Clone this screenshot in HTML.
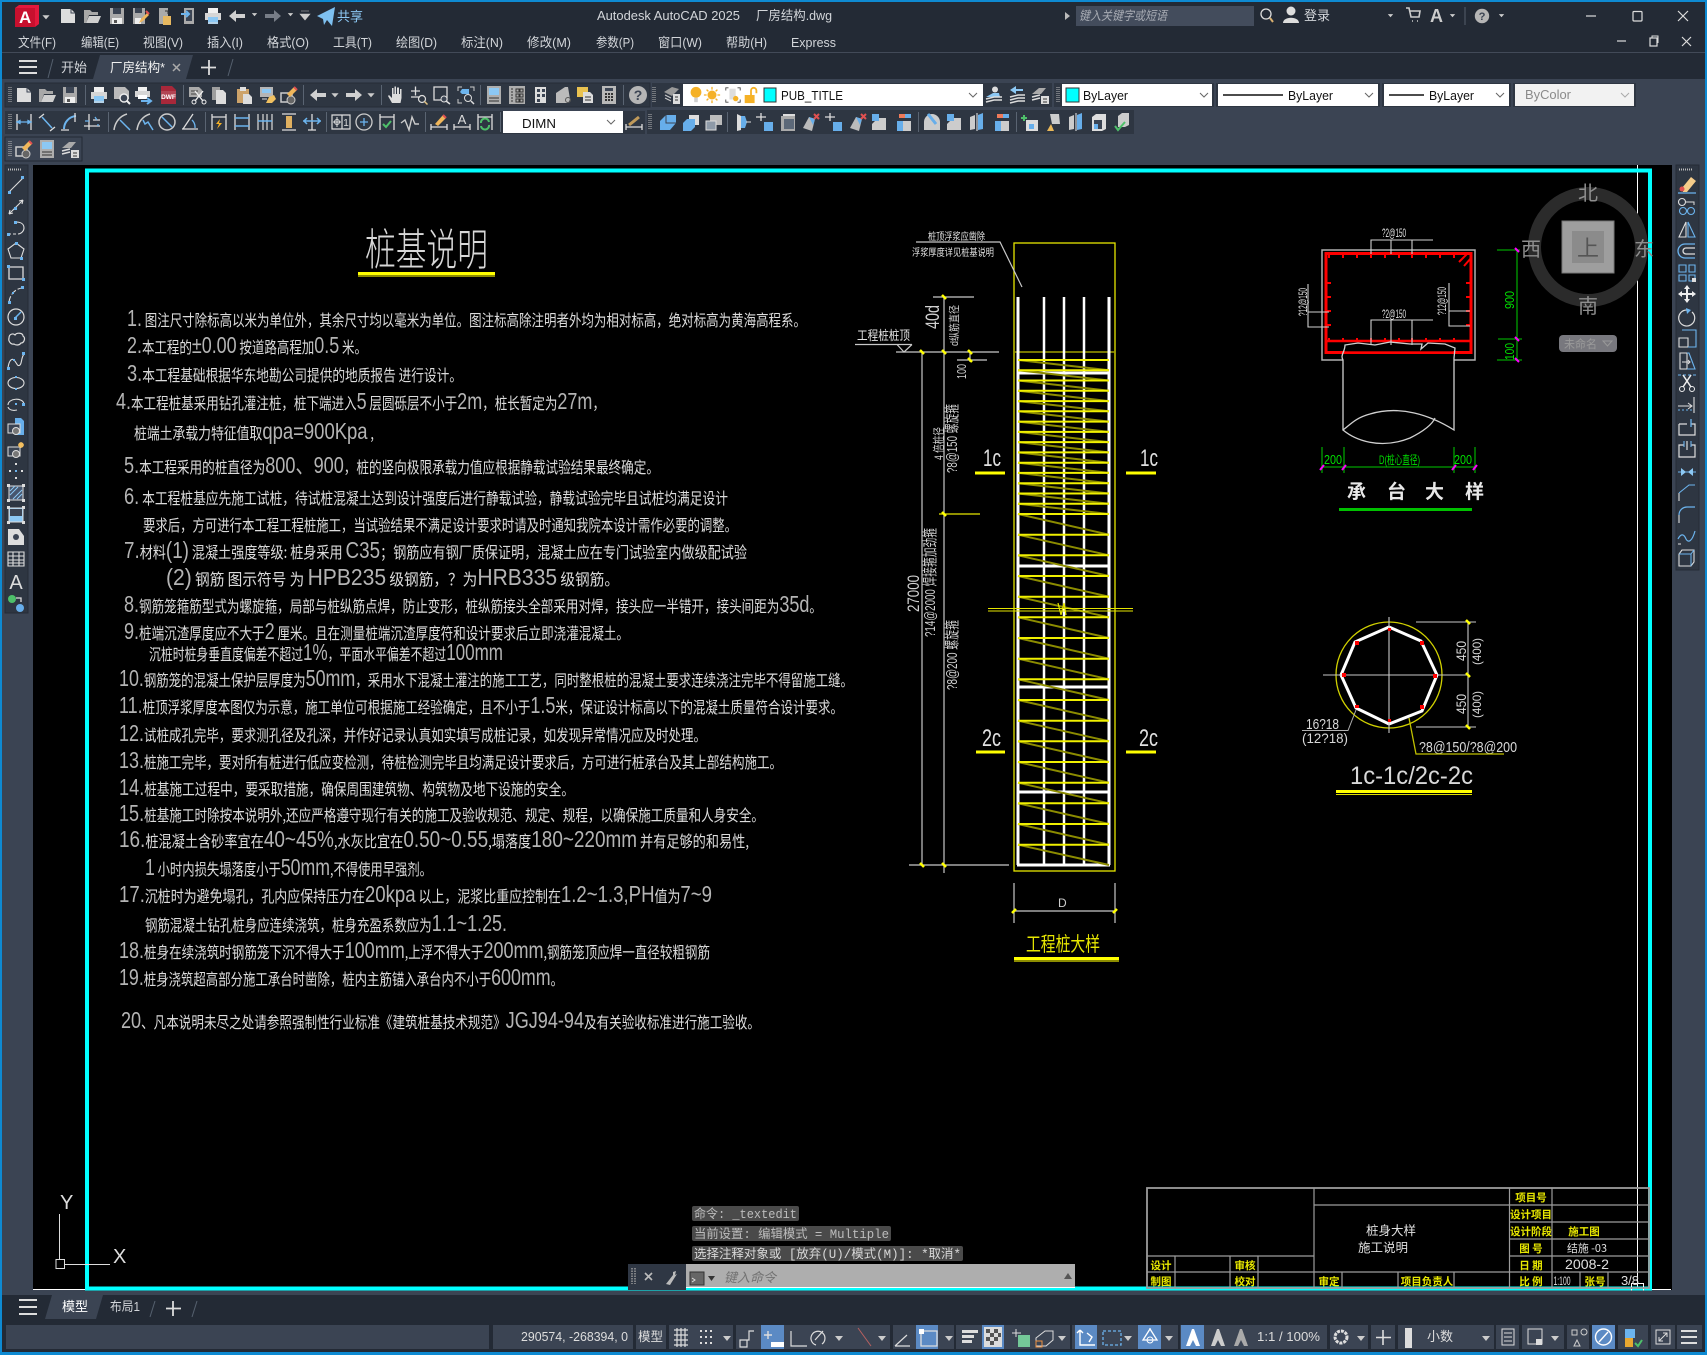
<!DOCTYPE html>
<html><head><meta charset="utf-8"><title>AutoCAD</title>
<style>
html,body{margin:0;padding:0;background:#232a35;overflow:hidden}
svg{display:block}
text{font-family:"Liberation Sans","Noto Sans CJK SC",sans-serif}
.m{font-size:13px;fill:#d3d6da}
.t{font-size:16px;fill:#dcdcdc;font-family:"Noto Sans CJK SC",sans-serif}
.n{font-size:23px;font-family:"Liberation Sans",sans-serif;fill:#b4b4b4}
.s{font-size:10px;fill:#e4e4e4;font-family:"Noto Sans CJK SC",sans-serif}
.y{font-size:10.5px;fill:#e8e800;font-family:"Noto Sans CJK SC",sans-serif;text-anchor:middle;font-weight:700}
.w{font-size:11px;fill:#e0e0e0;font-family:"Noto Sans CJK SC",sans-serif;text-anchor:middle}
.h{font-family:"Liberation Mono","Noto Sans CJK SC",monospace;font-size:12.5px;fill:#bdbdbd}
.dd{font-size:13px;fill:#111}
</style></head><body>
<svg xmlns="http://www.w3.org/2000/svg" width="1707" height="1355" viewBox="0 0 1707 1355">
<defs>
<symbol id="new" viewBox="0 0 20 20"><path d="M3 3h10l4 4v10H3z" fill="#ddd"/><path d="M13 3v4h4" fill="none" stroke="#3b4453"/></symbol>
<symbol id="open" viewBox="0 0 20 20"><path d="M2 17V4h6l2 2h6v3H7l-3 8z" fill="#a8a8a8"/><path d="M4 17l3-7h12l-3 7z" fill="#cfcfcf"/></symbol>
<symbol id="save" viewBox="0 0 20 20"><path d="M3 2h14v16H3z" fill="#a9a9a9"/><path d="M6 2h8v6H6z" fill="#3b4453"/><path d="M5 12h10v6H5z" fill="#eee"/><path d="M7 14h3v3H7z" fill="#555"/></symbol>
<symbol id="saveas" viewBox="0 0 20 20"><path d="M3 2h12v16H3z" fill="#a9a9a9"/><path d="M5 2h7v5H5z" fill="#3b4453"/><path d="M5 12h6v6H5z" fill="#eee"/><path d="M9 17l2-4 6-6 2 2-6 6z" fill="#f0b65a"/><path d="M16 5l3 3" stroke="#e05050" stroke-width="2"/></symbol>
<symbol id="sheet" viewBox="0 0 20 20"><path d="M5 2h9v16H5z" fill="#aaa"/><path d="M9 10h8v9H9z" fill="#e7b860"/><path d="M11 5h3v3" fill="none" stroke="#333"/></symbol>
<symbol id="pub" viewBox="0 0 20 20"><path d="M5 2h10v16H5z" fill="#aaa"/><path d="M7 4h6v11H7z" fill="#3b4453"/><path d="M2 8h8M7 5l3 3-3 3" fill="none" stroke="#6cb4ee" stroke-width="2"/></symbol>
<symbol id="print" viewBox="0 0 20 20"><path d="M5 2h10v5H5z" fill="#f0f0f0"/><path d="M2 7h16v7H2z" fill="#d6d6d6"/><path d="M5 11h10v7H5z" fill="#8cc8f4"/><path d="M5 17h10" stroke="#ddd"/></symbol>
<symbol id="prev" viewBox="0 0 20 20"><path d="M2 2h11l4 4v8H2z" fill="#bbb"/><circle cx="12" cy="13" r="4" fill="#3b4453" stroke="#eee" stroke-width="1.4"/><path d="M15 16l3 3" stroke="#eee" stroke-width="2"/></symbol>
<symbol id="plot" viewBox="0 0 20 20"><path d="M4 2h9v4H4z" fill="#f0f0f0"/><path d="M1 6h15v6H1z" fill="#d6d6d6"/><path d="M4 10h9v4H4z" fill="#fff"/><path d="M7 16h9M13 13l4 3-4 3" fill="none" stroke="#6cb4ee" stroke-width="2"/></symbol>
<symbol id="dwf" viewBox="0 0 20 20"><path d="M3 1h11l4 4v14H3z" fill="#a8283a"/><path d="M3 6h15v8H3z" fill="#eee" opacity=".15"/><text x="10.5" y="14" font-size="6.5" font-weight="700" fill="#fff" text-anchor="middle">DWF</text></symbol>
<symbol id="cut" viewBox="0 0 20 20"><path d="M2 2h10l3 3v7H2z" fill="#aaa"/><path d="M4 6h7M4 9h7" stroke="#444"/><path d="M8 6l8 10M16 6L8 16" stroke="#eee" stroke-width="1.4"/><circle cx="7" cy="17" r="2" fill="none" stroke="#eee"/><circle cx="17" cy="17" r="2" fill="none" stroke="#eee"/></symbol>
<symbol id="copy" viewBox="0 0 20 20"><path d="M3 2h8v13H3z" fill="#9e9e9e"/><path d="M7 5h7l3 3v11H7z" fill="#ddd"/></symbol>
<symbol id="paste" viewBox="0 0 20 20"><path d="M3 4h12v14H3z" fill="#cda36a"/><path d="M6 2h6v4H6z" fill="#e0e0e0"/><path d="M9 9h6l3 3v7H9z" fill="#ddd"/></symbol>
<symbol id="match" viewBox="0 0 20 20"><path d="M3 2h13v10H3z" fill="#b5b5b5"/><path d="M5 4h9v4H5z" fill="#8cc8f4"/><path d="M5 14h5" stroke="#ddd"/><path d="M9 18l3-6 5-2 2 4-4 4z" fill="#f0c060"/></symbol>
<symbol id="brush" viewBox="0 0 20 20"><path d="M2 8h11v9H2z" fill="none" stroke="#ccc" stroke-width="1.5"/><circle cx="12" cy="15" r="4" fill="#666" stroke="#ccc"/><path d="M8 9l7-7 3 3-7 7z" fill="#f0b65a"/><path d="M15 2l3 3" stroke="#e05050" stroke-width="2"/></symbol>
<symbol id="undo" viewBox="0 0 20 20"><path d="M9 4L2 10l7 6v-4h9V8H9z" fill="#d0d0d0"/></symbol>
<symbol id="redo" viewBox="0 0 20 20"><path d="M11 4l7 6-7 6v-4H2V8h9z" fill="#d0d0d0"/></symbol>
<symbol id="redog" viewBox="0 0 20 20"><path d="M11 4l7 6-7 6v-4H2V8h9z" fill="#777d87"/></symbol>
<symbol id="arr" viewBox="0 0 20 20"><path d="M4 7h12l-6 7z" fill="#ccc"/></symbol>
<symbol id="hand" viewBox="0 0 20 20"><path d="M6 18L2 11l1-1 3 3V3h1.500v6h1V1.500h1.500V9h1V2.500H13V9h1V4h1.500v9l-1 5z" fill="#ddd"/></symbol>
<symbol id="zr" viewBox="0 0 20 20"><path d="M2 6h9M6.500 1.500v9M2 12h9" stroke="#ddd" fill="none" stroke-width="1.300"/><circle cx="13" cy="14" r="3.500" fill="none" stroke="#ddd" stroke-width="1.200"/><path d="M15.500 16.500l3 3" stroke="#e0c080" stroke-width="1.500"/></symbol>
<symbol id="zw" viewBox="0 0 20 20"><path d="M2 2h13v13H2z" fill="none" stroke="#ddd" stroke-width="1.300"/><circle cx="12" cy="14" r="3" fill="#3b4453" stroke="#ddd"/><path d="M14 16l4 3" stroke="#ddd" stroke-width="1.500"/></symbol>
<symbol id="zp" viewBox="0 0 20 20"><path d="M2 6V2h4M14 2h4v4M2 14v4h4" fill="none" stroke="#ccc"/><path d="M13 4H6L4 7l2 2h7z" fill="#6cb4ee"/><circle cx="12" cy="13" r="3.500" fill="none" stroke="#ddd"/><path d="M15 16l3 3" stroke="#ddd" stroke-width="1.500"/></symbol>
<symbol id="pr" viewBox="0 0 20 20"><path d="M3 1h14v18H3z" fill="#aeaeae"/><path d="M5 3h10v7H5z" fill="#8cc8f4"/><path d="M5 13h10M5 16h10" stroke="#333"/></symbol>
<symbol id="dc" viewBox="0 0 20 20"><path d="M2 1h16v18H2z" fill="#aeaeae"/><path d="M5 3v14" stroke="#333" stroke-dasharray="2 1"/><path d="M9 4h3v3H9zM13 4h3v3h-3zM9 9h3v3H9zM13 9h3v3h-3zM9 14h3v3H9zM13 14h3v3h-3z" fill="none" stroke="#333"/></symbol>
<symbol id="tp" viewBox="0 0 20 20"><path d="M4 2h11v16H4z" fill="#ddd"/><path d="M6 4h3v3H6zM11 4h3v3h-3zM6 9h3v3H6zM11 9h3v3h-3zM6 14h3v3H6z" fill="#3b4453"/></symbol>
<symbol id="ss" viewBox="0 0 20 20"><path d="M2 18V8l9-6h3l2 12c-1 4-3 4-4 4z" fill="#bbb"/><circle cx="14" cy="15" r="2.500" fill="none" stroke="#555"/></symbol>
<symbol id="mk" viewBox="0 0 20 20"><path d="M2 2h11v10H2z" fill="#e9c250"/><path d="M8 7h7l3 3v8H8z" fill="#ddd"/><path d="M10 12h6M10 15h6" stroke="#333"/></symbol>
<symbol id="calc" viewBox="0 0 20 20"><path d="M3 1h14v18H3z" fill="#b8b8b8"/><path d="M6 3h8v3H6z" fill="#3b4453"/><path d="M6 8h2v2H6zM9 8h2v2H9zM12 8h2v2h-2zM6 11h2v2H6zM9 11h2v2H9zM12 11h2v2h-2zM6 14h2v2H6zM9 14h2v2H9zM12 14h2v2h-2z" fill="#333"/></symbol>
<symbol id="help" viewBox="0 0 20 20"><circle cx="10" cy="10" r="9" fill="#b5b5b5"/><text x="10" y="15" font-size="14" font-weight="700" fill="#3b4453" text-anchor="middle">?</text></symbol>
<symbol id="grip" viewBox="0 0 4 20"><path d="M1 2v16M3 2v16" stroke="#bbb" stroke-dasharray="1 1"/></symbol>
<symbol id="lyr" viewBox="0 0 20 20"><path d="M2 7l8-5 7 2-7 7z" fill="#999"/><path d="M3 10l6 3M3 13l6 3" stroke="#ccc"/><path d="M11 9h7v10h-7z" fill="#ddd"/><path d="M13 12h3M13 15h3" stroke="#333"/></symbol>
<symbol id="bulb" viewBox="0 0 20 20"><circle cx="10" cy="7" r="6" fill="#f5b126"/><path d="M8 13h4v5H8z" fill="#d0d0d0"/></symbol>
<symbol id="sun" viewBox="0 0 20 20"><circle cx="10" cy="10" r="5" fill="#f5b126"/><path d="M10 1v3M10 16v3M1 10h3M16 10h3M4 4l2 2M14 14l2 2M16 4l-2 2M4 16l2-2" stroke="#f5b126" stroke-width="1.500"/></symbol>
<symbol id="frz" viewBox="0 0 20 20"><path d="M2 5V2h3M15 2h3v3M2 15v3h3M15 18h3v-3" fill="none" stroke="#444"/><path d="M6 3h7v12H6z" fill="#ddd"/><circle cx="13" cy="14" r="3" fill="#f5b126"/></symbol>
<symbol id="lock" viewBox="0 0 20 20"><path d="M3 10h11v9H3z" fill="#f5b126"/><path d="M10 10V5a3 3 0 0 1 6 0v3" fill="none" stroke="#f5b126" stroke-width="2"/></symbol>
<symbol id="lm" viewBox="0 0 20 20"><circle cx="11" cy="4.500" r="3" fill="#ddd"/><path d="M2 12l7-4h6l1 4z" fill="#8cc8f4"/><path d="M2 14l8-2 8 0M2 17l8-2 8 0" stroke="#ddd" stroke-width="1.500" fill="none"/></symbol>
<symbol id="lp" viewBox="0 0 20 20"><path d="M9 1L3 5l6 4V6h7V4H9z" fill="#8cc8f4"/><path d="M3 12l8-2h7M3 15l8-2h7M3 18l8-2h7" stroke="#ddd" stroke-width="1.500" fill="none"/></symbol>
<symbol id="lw" viewBox="0 0 20 20"><path d="M2 9l7-6h7l-5 6z" fill="#aaa"/><path d="M2 12l8-2M2 15l8-2" stroke="#ddd" stroke-width="1.500"/><path d="M11 11h8v8h-8z" fill="#ddd"/><path d="M13 14h4M13 17h4" stroke="#333"/></symbol>
<symbol id="d1" viewBox="0 0 20 20"><path d="M3 2v16M17 2v16" stroke="#ddd" stroke-width="1.300"/><path d="M3 10h14M3 10l3-1.500v3zM17 10l-3-1.500v3z" stroke="#6cb4ee" stroke-width="1.300" fill="#6cb4ee"/></symbol>
<symbol id="d2" viewBox="0 0 20 20"><path d="M2 6l5-4M13 19l5-4" stroke="#ddd" stroke-width="1.300"/><path d="M5 5l10 11" stroke="#6cb4ee" stroke-width="1.500"/></symbol>
<symbol id="d3" viewBox="0 0 20 20"><path d="M4 17A13 13 0 0 1 16 4" fill="none" stroke="#6cb4ee" stroke-width="2"/><path d="M1 18h8M15 1v9" stroke="#ddd" stroke-width="1.300"/></symbol>
<symbol id="d4" viewBox="0 0 20 20"><path d="M2 14h16M7 2v16M11 8h7" stroke="#ddd" stroke-width="1.300"/><path d="M7 9H3M13 5l2 3M16 12v2" stroke="#6cb4ee" stroke-width="1.300"/></symbol>
<symbol id="d5" viewBox="0 0 20 20"><path d="M2 18C3 10 8 4 15 2" fill="none" stroke="#ccc" stroke-width="1.500"/><path d="M8 8l10 10" stroke="#6cb4ee" stroke-width="1.500"/></symbol>
<symbol id="d6" viewBox="0 0 20 20"><path d="M2 18C3 10 8 4 15 2" fill="none" stroke="#ccc" stroke-width="1.500"/><path d="M8 8l2 4 3-2 5 8" fill="none" stroke="#6cb4ee" stroke-width="1.500"/></symbol>
<symbol id="d7" viewBox="0 0 20 20"><circle cx="10" cy="10" r="8" fill="none" stroke="#ccc" stroke-width="1.500"/><path d="M5 5l10 10" stroke="#6cb4ee" stroke-width="1.500"/></symbol>
<symbol id="d8" viewBox="0 0 20 20"><path d="M2 17h16M3 17L13 2" stroke="#ddd" stroke-width="1.300"/><path d="M12 8a10 10 0 0 1 3 8" fill="none" stroke="#6cb4ee" stroke-width="1.300"/></symbol>
<symbol id="d9" viewBox="0 0 20 20"><path d="M3 2v16M17 2v16M3 5h14" stroke="#ddd" stroke-width="1.300"/><path d="M11 7l-4 5h3l-2 5 5-6h-3z" fill="#f5b126"/></symbol>
<symbol id="d10" viewBox="0 0 20 20"><path d="M3 2v16M17 2v16" stroke="#ddd" stroke-width="1.300"/><path d="M3 6h14M3 14h14" stroke="#6cb4ee" stroke-width="1.500"/></symbol>
<symbol id="d11" viewBox="0 0 20 20"><path d="M3 2v16M17 2v16M8 2v16M12 2v16" stroke="#ddd" stroke-width="1.200"/><path d="M3 9h14" stroke="#6cb4ee" stroke-width="1.500"/></symbol>
<symbol id="d12" viewBox="0 0 20 20"><path d="M3 2h14M3 18h14" stroke="#ddd" stroke-width="1.300"/><path d="M7 4h6v12H7z" fill="#e0b060"/></symbol>
<symbol id="d13" viewBox="0 0 20 20"><path d="M10 2v16M6 18h8" stroke="#ddd" stroke-width="1.300"/><path d="M1 9h18M15 6l3 3-3 3M5 6L2 9l3 3" fill="none" stroke="#6cb4ee" stroke-width="1.500"/></symbol>
<symbol id="d14" viewBox="0 0 20 20"><path d="M1 3h18v14H1zM11 3v14" fill="none" stroke="#ddd" stroke-width="1.200"/><circle cx="6" cy="10" r="2.500" fill="none" stroke="#ddd"/><path d="M6 5v10M2 10h8" stroke="#ddd"/><text x="15" y="14" font-size="10" fill="#ddd" text-anchor="middle">1</text></symbol>
<symbol id="d15" viewBox="0 0 20 20"><circle cx="10" cy="10" r="8" fill="none" stroke="#ccc" stroke-width="1.300"/><path d="M10 6v8M6 10h8" stroke="#6cb4ee" stroke-width="1.300"/></symbol>
<symbol id="d16" viewBox="0 0 20 20"><path d="M3 2v16M17 2v16M3 5h14" stroke="#ddd" stroke-width="1.300"/><path d="M6 12l3 3 5-6" fill="none" stroke="#4ec06a" stroke-width="2"/></symbol>
<symbol id="d17" viewBox="0 0 20 20"><path d="M1 11l4-3 4 10 3-13 3 7h4" fill="none" stroke="#ccc" stroke-width="1.400"/></symbol>
<symbol id="d18" viewBox="0 0 20 20"><path d="M2 12v6M18 12v6M2 15h16" stroke="#ddd" stroke-width="1.300"/><path d="M6 12l8-9 3 3-8 8z" fill="#f0b65a"/><path d="M14 3l3 3" stroke="#e05050" stroke-width="2"/></symbol>
<symbol id="d19" viewBox="0 0 20 20"><path d="M2 12v6M18 12v6M2 15h16" stroke="#ddd" stroke-width="1.300"/><text x="10" y="12" font-size="13" fill="#ddd" text-anchor="middle">A</text></symbol>
<symbol id="d20" viewBox="0 0 20 20"><path d="M3 2v16M17 2v16M3 5h14" stroke="#ddd" stroke-width="1.300"/><path d="M6 11a4 4 0 0 1 8-1M14 13a4 4 0 0 1-8 1" fill="none" stroke="#4ec06a" stroke-width="2"/></symbol>
<symbol id="d21" viewBox="0 0 20 20"><path d="M2 12v6M18 12v6M2 15h16" stroke="#ddd" stroke-width="1.300"/><path d="M5 13l10-8" stroke="#c09a5a" stroke-width="3"/></symbol>
<symbol id="s1" viewBox="0 0 20 20"><path d="M2 9l6-6h10v8l-6 7H2z" fill="#67aeea"/><path d="M8 3v8h10" fill="none" stroke="#3b4453"/></symbol>
<symbol id="s2" viewBox="0 0 20 20"><path d="M2 11l4-4h8v8l-4 4H2z" fill="#67aeea"/><path d="M8 3h10v10h-4V7H8z" fill="#ddd"/></symbol>
<symbol id="s3" viewBox="0 0 20 20"><path d="M6 3h12v10H6z" fill="#bbb"/><path d="M2 9h10v9H2z" fill="#8e9aa8" stroke="#ddd"/></symbol>
<symbol id="s4" viewBox="0 0 20 20"><path d="M5 2l4 2v14l-4 1z" fill="#ddd"/><path d="M9 4h4l2 6-2 6H9z" fill="#67aeea"/><path d="M14 10h5" stroke="#ddd"/></symbol>
<symbol id="s5" viewBox="0 0 20 20"><path d="M1 5h10M6 1v8" stroke="#ddd" stroke-width="1.300"/><path d="M9 10h9v9H9z" fill="#67aeea"/></symbol>
<symbol id="s6" viewBox="0 0 20 20"><path d="M3 4h14v15H3z" fill="#aaa"/><path d="M6 7h10v10H6z" fill="#5c6878"/><path d="M5 2h12v2H5z" fill="#ddd"/></symbol>
<symbol id="s7" viewBox="0 0 20 20"><path d="M2 16L8 5l6 2-3 12z" fill="#bbb"/><path d="M8 5l6 2-2 6" fill="#67aeea"/><path d="M13 2l5 5M18 2l-5 5" stroke="#e05050" stroke-width="2"/></symbol>
<symbol id="s8" viewBox="0 0 20 20"><path d="M10 2a8 8 0 0 1 8 8v8H2v-8a8 8 0 0 1 8-8z" fill="#ccc"/><path d="M6 2l8 10" stroke="#67aeea" stroke-width="3"/></symbol>
<symbol id="s9" viewBox="0 0 20 20"><path d="M2 12l6-6h8v12H2z" fill="#ccc"/><path d="M2 2h7v7H2z" fill="#67aeea"/></symbol>
<symbol id="s10" viewBox="0 0 20 20"><path d="M6 2h8v4H6z" fill="#ee7a5a"/><path d="M12 2h6v4h-6z" fill="#67aeea"/><path d="M4 9h14v10H4z" fill="#67aeea"/><path d="M10 9h8v10h-8z" fill="#ccc"/></symbol>
<symbol id="s11" viewBox="0 0 20 20"><path d="M1 6h6M4 3v6" stroke="#4ec06a" stroke-width="2"/><path d="M6 8h12v11H6z" fill="#ddd"/><path d="M9 12h5v5H9z" fill="#67aeea"/></symbol>
<symbol id="s12" viewBox="0 0 20 20"><path d="M7 2h9l1 10H9z" fill="#ccc"/><path d="M8 12l-4 7h7z" fill="#e9b85a"/></symbol>
<symbol id="s13" viewBox="0 0 20 20"><path d="M3 5l5-2v14l-5 1z" fill="#ccc"/><path d="M11 3l5-2v16l-5 1z" fill="#67aeea"/><path d="M10 1v18" stroke="#eee"/></symbol>
<symbol id="s14" viewBox="0 0 20 20"><path d="M3 5l4-3h10v15l-4 2H3z" fill="#ddd"/><path d="M5 8h8v9H5z" fill="#3b4453"/><path d="M5 12h4v5H5z" fill="#67aeea"/></symbol>
<symbol id="s15" viewBox="0 0 20 20"><path d="M6 4l4-3h7v12l-4 2H6z" fill="#ccc"/><path d="M3 14l3 4 7-8" fill="none" stroke="#4ec06a" stroke-width="2"/></symbol>
<symbol id="l1" viewBox="0 0 20 20"><path d="M3 17L17 3" stroke="#ddd" stroke-width="1.100"/><path d="M2 16h3v3H2zM15 1h3v3h-3z" fill="#6cb4ee"/></symbol>
<symbol id="l2" viewBox="0 0 20 20"><path d="M3 17L17 3M3 17l1-4M3 17l4-1M17 3l-1 4M17 3l-4 1" stroke="#ddd" stroke-width="1.100" fill="none"/><path d="M8 10h3v3H8z" fill="#6cb4ee"/></symbol>
<symbol id="l3" viewBox="0 0 20 20"><path d="M2 15h10" stroke="#ddd" stroke-width="1.100" stroke-dasharray="3 2"/><path d="M10 3c6 0 8 3 8 6s-3 6-6 6" fill="none" stroke="#ddd" stroke-width="1.100"/><path d="M1 14h3v3H1zM8 2h3v3H8z" fill="#6cb4ee"/></symbol>
<symbol id="l4" viewBox="0 0 20 20"><path d="M10 2l8 6-3 9H5L2 8z" fill="none" stroke="#ddd" stroke-width="1.100"/><path d="M9 1h3v3H9zM14 16h3v3h-3z" fill="#6cb4ee"/></symbol>
<symbol id="l5" viewBox="0 0 20 20"><path d="M3 4h14v12H3z" fill="none" stroke="#ddd" stroke-width="1.300"/><path d="M1 2h3v3H1zM16 15h3v3h-3z" fill="#6cb4ee"/></symbol>
<symbol id="l6" viewBox="0 0 20 20"><path d="M3 17C4 9 10 3 17 3" fill="none" stroke="#ddd" stroke-width="1.100" stroke-dasharray="6 2"/><path d="M2 16h3v3H2zM15 1h3v3h-3zM6 7h2v2H6z" fill="#6cb4ee"/></symbol>
<symbol id="l7" viewBox="0 0 20 20"><circle cx="10" cy="10" r="8" fill="none" stroke="#ddd" stroke-width="1.200"/><path d="M9 11l6-6" stroke="#6cb4ee" stroke-width="1.500"/><path d="M8 10h3v3H8z" fill="#6cb4ee"/></symbol>
<symbol id="l8" viewBox="0 0 20 20"><path d="M3 9c0-4 4-5 6-3 2-3 8-2 8 1 3 2 1 7-2 7-2 3-6 2-7 1-3 1-6-3-5-6z" fill="none" stroke="#ddd" stroke-width="1.200"/></symbol>
<symbol id="l9" viewBox="0 0 20 20"><path d="M2 17c1-8 4-10 6-8 3 3 3 7 6 5 2-2 1-7 4-11" fill="none" stroke="#ddd" stroke-width="1.100"/><path d="M1 16h3v3H1zM16 1h3v3h-3zM7 8h2v2H7z" fill="#6cb4ee"/></symbol>
<symbol id="l10" viewBox="0 0 20 20"><ellipse cx="10" cy="10" rx="8" ry="5.500" fill="none" stroke="#ddd" stroke-width="1.100"/><path d="M9 3h2v2H9zM9 15h2v2H9z" fill="#6cb4ee"/></symbol>
<symbol id="l11" viewBox="0 0 20 20"><path d="M2 11c0-7 15-8 16-1M11 16c-4 1-8 0-9-3" fill="none" stroke="#ddd" stroke-width="1.100"/><path d="M9 9h2v2H9zM16 9h3v3h-3z" fill="#6cb4ee"/></symbol>
<symbol id="l12" viewBox="0 0 20 20"><path d="M9 1h6l3 3v14H9z" fill="#67aeea"/><path d="M2 7h12v9H2z" fill="#3b4453" stroke="#ddd"/><circle cx="10" cy="14" r="3.500" fill="#777" stroke="#ddd"/></symbol>
<symbol id="l13" viewBox="0 0 20 20"><path d="M2 7h12v9H2z" fill="#3b4453" stroke="#ddd"/><circle cx="10" cy="14" r="3.500" fill="#777" stroke="#ddd"/><path d="M15 2v6M12 5h6M13 3l4 4M17 3l-4 4" stroke="#f5c060" stroke-width="1.500"/></symbol>
<symbol id="l14" viewBox="0 0 20 20"><path d="M3 10h2M15 10h2M9 3h2M9 17h2M9 10h2" stroke="#ddd" stroke-width="2"/><path d="M9 9h2v2H9z" fill="#6cb4ee"/></symbol>
<symbol id="l15" viewBox="0 0 20 20"><path d="M3 3h14v14H3z" fill="#47566e" stroke="#ddd"/><path d="M4 12l8-8M7 16l9-9M4 8l5-5M11 16l5-5" stroke="#8cc8f4"/><path d="M1 1h3v3H1zM16 16h3v3h-3zM16 1h3v3h-3zM1 16h3v3H1z" fill="#ddd"/></symbol>
<symbol id="l16" viewBox="0 0 20 20"><path d="M3 3h14v14H3z" fill="#8cc8f4" stroke="#ddd"/><path d="M4 4h12v7H4z" fill="#3b4453"/><path d="M1 1h3v3H1zM16 16h3v3h-3zM16 1h3v3h-3zM1 16h3v3H1z" fill="#ddd"/></symbol>
<symbol id="l17" viewBox="0 0 20 20"><path d="M2 18V2h11l5 7v9z" fill="#ddd"/><circle cx="10" cy="10" r="3" fill="#3b4453"/></symbol>
<symbol id="l18" viewBox="0 0 20 20"><path d="M2 3h16v14H2zM2 7h16M2 11h16M2 14h16M7 3v14M13 3v14" fill="none" stroke="#ddd" stroke-width="1.100"/></symbol>
<symbol id="l19" viewBox="0 0 20 20"><text x="10" y="17" font-size="20" fill="#ddd" text-anchor="middle">A</text></symbol>
<symbol id="l20" viewBox="0 0 20 20"><circle cx="6" cy="6" r="4" fill="#4ec06a"/><circle cx="14" cy="15" r="4" fill="#67aeea"/><path d="M10 5h5v4" fill="none" stroke="#ddd" stroke-width="1.300"/></symbol>
<symbol id="r1" viewBox="0 0 20 20"><path d="M5 13L14 2l5 4-9 11H6z" fill="#f5cc8a"/><circle cx="5" cy="14" r="2.500" fill="#e05050"/><path d="M1 18h18" stroke="#6cb4ee" stroke-width="1.300"/></symbol>
<symbol id="r2" viewBox="0 0 20 20"><circle cx="5" cy="5" r="3.500" fill="none" stroke="#ddd" stroke-width="1.100"/><path d="M9 5h8v3" fill="none" stroke="#ddd"/><circle cx="6" cy="14" r="3.500" fill="none" stroke="#6cb4ee" stroke-width="1.100"/><circle cx="14" cy="14" r="3.500" fill="none" stroke="#6cb4ee" stroke-width="1.100"/></symbol>
<symbol id="r3" viewBox="0 0 20 20"><path d="M2 18L9 3v15z" fill="none" stroke="#ddd" stroke-width="1.100"/><path d="M18 18L11 3v15z" fill="none" stroke="#6cb4ee" stroke-width="1.100"/></symbol>
<symbol id="r4" viewBox="0 0 20 20"><path d="M18 3H8a7 7 0 0 0 0 14h10" fill="none" stroke="#6cb4ee" stroke-width="1.300"/><path d="M18 7H9a3 3 0 0 0 0 6h9" fill="none" stroke="#ddd" stroke-width="1.300"/></symbol>
<symbol id="r5" viewBox="0 0 20 20"><path d="M2 2h7v7H2zM12 2h6v7h-6zM2 12h7v6H2zM12 12h6v6h-6z" fill="none" stroke="#6cb4ee" stroke-width="1.100"/><path d="M15 15h4v4h-4z" fill="#ddd"/></symbol>
<symbol id="r6" viewBox="0 0 20 20"><path d="M10 1l3 4h-2v4h4V7l4 3-4 3v-2h-4v4h2l-3 4-3-4h2v-4H5v2l-4-3 4-3v2h4V5H7z" fill="#eee"/></symbol>
<symbol id="r7" viewBox="0 0 20 20"><path d="M15 5a8 8 0 1 1-5-2" fill="none" stroke="#ddd" stroke-width="1.200"/><path d="M9 1l5 2-4 4z" fill="#6cb4ee"/></symbol>
<symbol id="r8" viewBox="0 0 20 20"><path d="M2 10h9v9H2z" fill="none" stroke="#ddd" stroke-width="1.100"/><path d="M5 2h14v17h-8" fill="none" stroke="#6cb4ee" stroke-width="1.100"/></symbol>
<symbol id="r9" viewBox="0 0 20 20"><path d="M3 2h7v16H3z" fill="none" stroke="#ddd" stroke-width="1.100"/><path d="M10 2h2l6 16h-8" fill="none" stroke="#6cb4ee" stroke-width="1.100"/><path d="M5 11h8M11 9l2 2-2 2" fill="none" stroke="#ddd"/></symbol>
<symbol id="r10" viewBox="0 0 20 20"><path d="M1 2h18" stroke="#6cb4ee" stroke-dasharray="3 2"/><path d="M6 2l8 12M14 2L6 14" stroke="#eee" stroke-width="1.500"/><circle cx="5" cy="16" r="2.500" fill="none" stroke="#eee"/><circle cx="15" cy="16" r="2.500" fill="none" stroke="#eee"/></symbol>
<symbol id="r11" viewBox="0 0 20 20"><path d="M17 2v16" stroke="#ddd" stroke-width="1.100"/><path d="M1 11h14M11 8l4 3-4 3" stroke="#ddd" fill="none"/><path d="M1 15h14" stroke="#6cb4ee" stroke-dasharray="2 2"/></symbol>
<symbol id="r12" viewBox="0 0 20 20"><path d="M2 7h8M14 7h4v11H2V7" fill="none" stroke="#ddd" stroke-width="1.200"/><path d="M14 2v8" stroke="#6cb4ee" stroke-width="1.300"/></symbol>
<symbol id="r13" viewBox="0 0 20 20"><path d="M7 6H2v12h16V6h-4M10 2v9" fill="none" stroke="#ddd" stroke-width="1.200"/><path d="M7 2v6M14 2v6" stroke="#6cb4ee" stroke-width="1.100"/></symbol>
<symbol id="r14" viewBox="0 0 20 20"><path d="M1 10h18" stroke="#6cb4ee" stroke-width="1.100"/><path d="M4 6l5 4-5 4zM16 6l-5 4 5 4z" fill="#8cc8f4"/></symbol>
<symbol id="r15" viewBox="0 0 20 20"><path d="M2 18V10" stroke="#ddd" stroke-width="1.100"/><path d="M2 10L12 2h6" fill="none" stroke="#6cb4ee" stroke-width="1.100"/></symbol>
<symbol id="r16" viewBox="0 0 20 20"><path d="M2 18v-8" stroke="#ddd" stroke-width="1.100"/><path d="M2 10a8 8 0 0 1 8-8h8" fill="none" stroke="#6cb4ee" stroke-width="1.200"/></symbol>
<symbol id="r17" viewBox="0 0 20 20"><path d="M1 12c3-6 6-5 8 0 2 4 6 3 9-8" fill="none" stroke="#6cb4ee" stroke-width="1.200"/><path d="M1 17h3" stroke="#ddd"/></symbol>
<symbol id="r18" viewBox="0 0 20 20"><path d="M5 2l-3 4v12h12l3-4V2z" fill="none" stroke="#ddd" stroke-width="1.100"/><path d="M2 6h12v12M14 6l3-4" stroke="#6cb4ee" fill="none"/></symbol>
<symbol id="st" viewBox="0 0 20 20"><path d="M2 3h16v3H2zM2 8h12v3H2zM2 13h10v3H2z" fill="#ddd"/></symbol>
</defs>

<!-- window bg -->
<rect width="1707" height="1355" fill="#232a35"/>
<!-- toolbar area -->
<rect x="2" y="79" width="1703" height="86" fill="#3b4453"/>
<rect x="2" y="165" width="31" height="1130" fill="#3b4453"/>
<rect x="1672" y="165" width="33" height="1130" fill="#3b4453"/>
<rect x="33" y="165" width="1639" height="1125" fill="#000"/>
<rect x="2" y="1290" width="1703" height="5" fill="#3b4453"/>
<!-- borders -->
<path d="M0 1H1707" stroke="#0e8ad2" stroke-width="2"/>
<path d="M1 0V1355M1706 0V1355" stroke="#0e8ad2" stroke-width="2"/>
<path d="M0 1353.500H1707" stroke="#0e8ad2" stroke-width="3"/>

<!-- title bar -->
<path d="M15 8l4-3h20v19l-4 3H15z" fill="#e3183c"/><path d="M15 8h20v19H15z" fill="#c8102e"/>
<text x="19" y="23" font-size="17" font-weight="700" fill="#fff">A</text>
<use href="#arr" x="40" y="11" width="12" height="12"/>
<use href="#new" x="58" y="6" width="20" height="20"/><use href="#open" x="82" y="6" width="20" height="20"/><use href="#save" x="107" y="6" width="20" height="20"/><use href="#saveas" x="130" y="6" width="20" height="20"/><use href="#sheet" x="154" y="6" width="20" height="20"/><use href="#pub" x="179" y="6" width="20" height="20"/><use href="#print" x="203" y="6" width="20" height="20"/><use href="#undo" x="227" y="6" width="20" height="20"/><use href="#arr" x="250" y="10" width="9" height="9"/><use href="#redog" x="263" y="6" width="20" height="20"/><use href="#arr" x="286" y="10" width="9" height="9"/>
<path d="M301 11h8M300 14h10l-5 6z" fill="#ccc" stroke="#ccc" stroke-width=".6"/>
<path d="M317 16L335 7l-3 19-5-6-3 5-1-6z" fill="#7ec0f0"/>
<text x="337" y="21" class="m" style="fill:#8cc8f4">共享</text>
<text x="597" y="20" class="m" textLength="143" lengthAdjust="spacingAndGlyphs">Autodesk AutoCAD 2025</text>
<text x="756" y="20" class="m" textLength="76" lengthAdjust="spacingAndGlyphs">厂房结构.dwg</text>
<path d="M1065 12l5 4-5 4z" fill="#bbb"/>
<rect x="1076" y="6" width="178" height="20" fill="#434c5c"/>
<text x="1079" y="20" font-size="12.500" fill="#a7abb3" font-style="italic" textLength="88" lengthAdjust="spacingAndGlyphs">键入关键字或短语</text>
<circle cx="1266" cy="14" r="5" fill="none" stroke="#ddd" stroke-width="1.300"/><path d="M1270 18l3 4" stroke="#d9b070" stroke-width="2"/>
<circle cx="1291" cy="11" r="4.500" fill="#ddd"/><path d="M1283 23c0-7 16-7 16 0z" fill="#ddd"/>
<text x="1304" y="20" class="m">登录</text>
<use href="#arr" x="1386" y="11" width="9" height="9"/>
<path d="M1406 8h3l2 9h8l1-6h-10M1412 21h1M1417 21h1" fill="none" stroke="#ccc" stroke-width="1.600"/>
<text x="1430" y="22" font-size="18" font-weight="700" fill="#ccc">A</text>
<use href="#arr" x="1448" y="11" width="9" height="9"/>
<path d="M1465 7v18" stroke="#555d6a"/>
<use href="#help" x="1474" y="8" width="16" height="16"/>
<use href="#arr" x="1497" y="11" width="9" height="9"/>
<path d="M1586 16h10" stroke="#ddd" stroke-width="1.200"/><rect x="1633" y="11.500" width="9" height="9.500" fill="none" stroke="#ddd" stroke-width="1.200" rx="1"/><path d="M1678 11l10 10M1688 11l-10 10" stroke="#ddd" stroke-width="1.200"/>

<!-- menu bar -->
<g>
<text x="18" y="47" class="m" textLength="38" lengthAdjust="spacingAndGlyphs">文件(F)</text>
<text x="81" y="47" class="m" textLength="38" lengthAdjust="spacingAndGlyphs">编辑(E)</text>
<text x="143" y="47" class="m" textLength="40" lengthAdjust="spacingAndGlyphs">视图(V)</text>
<text x="207" y="47" class="m" textLength="36" lengthAdjust="spacingAndGlyphs">插入(I)</text>
<text x="267" y="47" class="m" textLength="42" lengthAdjust="spacingAndGlyphs">格式(O)</text>
<text x="333" y="47" class="m" textLength="39" lengthAdjust="spacingAndGlyphs">工具(T)</text>
<text x="396" y="47" class="m" textLength="41" lengthAdjust="spacingAndGlyphs">绘图(D)</text>
<text x="461" y="47" class="m" textLength="42" lengthAdjust="spacingAndGlyphs">标注(N)</text>
<text x="527" y="47" class="m" textLength="44" lengthAdjust="spacingAndGlyphs">修改(M)</text>
<text x="596" y="47" class="m" textLength="38" lengthAdjust="spacingAndGlyphs">参数(P)</text>
<text x="658" y="47" class="m" textLength="44" lengthAdjust="spacingAndGlyphs">窗口(W)</text>
<text x="726" y="47" class="m" textLength="41" lengthAdjust="spacingAndGlyphs">帮助(H)</text>
<text x="791" y="47" class="m" textLength="45" lengthAdjust="spacingAndGlyphs">Express</text>
</g>
<path d="M1617 41h9" stroke="#ddd" stroke-width="1.200"/><rect x="1650" y="38" width="7" height="8" fill="none" stroke="#ddd" stroke-width="1.200"/><path d="M1652 38v-2h6v7" fill="none" stroke="#ddd"/><path d="M1682 37l9 9M1691 37l-9 9" stroke="#ddd" stroke-width="1.200"/>
<path d="M2 52.500H1705" stroke="#424a58"/>

<!-- file tabs -->
<path d="M19 61h18M19 67h18M19 73h18" stroke="#ddd" stroke-width="2"/>
<path d="M48 78l5-19" stroke="#55606e"/>
<text x="61" y="72" class="m">开始</text>
<path d="M93 79l7-24h93l-7 24z" fill="#3b4453"/>
<text x="110" y="72" class="m" style="fill:#f0f0f0" textLength="55" lengthAdjust="spacingAndGlyphs">厂房结构*</text>
<path d="M173 64l7 7M180 64l-7 7" stroke="#aaa" stroke-width="1.500"/>
<path d="M209 60v15M201 67.500h15" stroke="#ddd" stroke-width="1.800"/>
<path d="M228 76l5-17" stroke="#55606e"/>

<!-- toolbars -->
<rect x="5" y="83" width="645" height="24" fill="#2e3642" stroke="#262c37"/>
<rect x="652" y="83" width="400" height="24" fill="#2e3642"/>
<rect x="1054" y="83" width="160" height="24" fill="#2e3642"/><rect x="1216" y="83" width="164" height="24" fill="#2e3642"/><rect x="1382" y="83" width="129" height="24" fill="#2e3642"/><rect x="1513" y="83" width="123" height="24" fill="#2e3642"/>
<rect x="5" y="111" width="618" height="23" fill="#2e3642"/><rect x="623" y="111" width="22" height="23" fill="#2e3642"/>
<rect x="647" y="110" width="487" height="24" fill="#2e3642"/>
<rect x="5" y="137" width="77" height="24" fill="#3b4453" stroke="#232a35"/>
<use href="#grip" x="8" y="85" width="4" height="20"/><use href="#grip" x="8" y="112" width="4" height="20"/><use href="#grip" x="8" y="139" width="4" height="20"/><use href="#grip" x="652" y="85" width="4" height="20"/><use href="#grip" x="1056" y="85" width="4" height="20"/><use href="#grip" x="648" y="112" width="4" height="20"/>
<g fill="#5a6472">
<rect x="85" y="85" width="1" height="20"/><rect x="183" y="85" width="1" height="20"/><rect x="303" y="85" width="1" height="20"/><rect x="381" y="85" width="1" height="20"/><rect x="480" y="85" width="1" height="20"/><rect x="623" y="85" width="1" height="20"/>
<rect x="108" y="112" width="1" height="20"/><rect x="205" y="112" width="1" height="20"/><rect x="326" y="112" width="1" height="20"/><rect x="425" y="112" width="1" height="20"/><rect x="500" y="112" width="1" height="20"/><rect x="727" y="112" width="1" height="20"/><rect x="918" y="112" width="1" height="20"/><rect x="1016" y="112" width="1" height="20"/>
</g>
<g>
<use href="#new" x="14" y="85" width="20" height="20"/><use href="#open" x="37" y="85" width="20" height="20"/><use href="#save" x="60" y="85" width="20" height="20"/><use href="#print" x="89" y="85" width="20" height="20"/><use href="#prev" x="112" y="85" width="20" height="20"/><use href="#plot" x="134" y="85" width="20" height="20"/><use href="#dwf" x="158" y="85" width="20" height="20"/><use href="#cut" x="187" y="85" width="20" height="20"/><use href="#copy" x="209" y="85" width="20" height="20"/><use href="#paste" x="234" y="85" width="20" height="20"/><use href="#match" x="257" y="85" width="20" height="20"/><use href="#brush" x="279" y="85" width="20" height="20"/><use href="#undo" x="308" y="85" width="20" height="20"/><use href="#arr" x="329" y="89" width="12" height="12"/><use href="#redo" x="344" y="85" width="20" height="20"/><use href="#arr" x="365" y="89" width="12" height="12"/><use href="#hand" x="386" y="85" width="20" height="20"/><use href="#zr" x="409" y="85" width="20" height="20"/><use href="#zw" x="432" y="85" width="20" height="20"/><use href="#zp" x="456" y="85" width="20" height="20"/><use href="#pr" x="484" y="85" width="20" height="20"/><use href="#dc" x="507" y="85" width="20" height="20"/><use href="#tp" x="531" y="85" width="20" height="20"/><use href="#ss" x="554" y="85" width="20" height="20"/><use href="#mk" x="575" y="85" width="20" height="20"/><use href="#calc" x="599" y="85" width="20" height="20"/><use href="#help" x="628" y="85" width="20" height="20"/><use href="#lyr" x="662" y="85" width="20" height="20"/>
<rect x="683" y="84" width="300" height="22" fill="#fff"/>
<use href="#bulb" x="687" y="86" width="18" height="18"/><use href="#sun" x="703" y="86" width="18" height="18"/><use href="#frz" x="724" y="86" width="18" height="18"/><use href="#lock" x="742" y="86" width="18" height="18"/>
<rect x="764" y="88" width="12" height="14" fill="#0ff" stroke="#333"/>
<text x="781" y="100" class="dd" textLength="62" lengthAdjust="spacingAndGlyphs">PUB_TITLE</text>
<path d="M969 93l4 4 4-4" fill="none" stroke="#666"/>
<use href="#lm" x="984" y="85" width="20" height="20"/><use href="#lp" x="1007" y="85" width="20" height="20"/><use href="#lw" x="1030" y="85" width="20" height="20"/>
<rect x="1062" y="84" width="150" height="22" fill="#fff"/><rect x="1066" y="88" width="13" height="14" fill="#0ff" stroke="#333"/><text x="1083" y="100" class="dd" textLength="45" lengthAdjust="spacingAndGlyphs">ByLayer</text><path d="M1200 93l4 4 4-4" fill="none" stroke="#666"/>
<rect x="1218" y="84" width="160" height="22" fill="#fff"/><path d="M1223 95h60" stroke="#111" stroke-width="1.400"/><text x="1288" y="100" class="dd" textLength="45" lengthAdjust="spacingAndGlyphs">ByLayer</text><path d="M1365 93l4 4 4-4" fill="none" stroke="#666"/>
<rect x="1384" y="84" width="125" height="22" fill="#fff"/><path d="M1389 95h35" stroke="#111" stroke-width="1.400"/><text x="1429" y="100" class="dd" textLength="45" lengthAdjust="spacingAndGlyphs">ByLayer</text><path d="M1496 93l4 4 4-4" fill="none" stroke="#666"/>
<rect x="1515" y="84" width="119" height="22" fill="#f2f2f2"/><text x="1525" y="99" class="dd" style="fill:#8a8a8a" textLength="46" lengthAdjust="spacingAndGlyphs">ByColor</text><path d="M1621 93l4 4 4-4" fill="none" stroke="#aaa"/>
</g>
<g>
<use href="#d1" x="14" y="112" width="20" height="20"/><use href="#d2" x="37" y="112" width="20" height="20"/><use href="#d3" x="60" y="112" width="20" height="20"/><use href="#d4" x="82" y="112" width="20" height="20"/><use href="#d5" x="112" y="112" width="20" height="20"/><use href="#d6" x="135" y="112" width="20" height="20"/><use href="#d7" x="157" y="112" width="20" height="20"/><use href="#d8" x="180" y="112" width="20" height="20"/><use href="#d9" x="209" y="112" width="20" height="20"/><use href="#d10" x="232" y="112" width="20" height="20"/><use href="#d11" x="255" y="112" width="20" height="20"/><use href="#d12" x="279" y="112" width="20" height="20"/><use href="#d13" x="302" y="112" width="20" height="20"/><use href="#d14" x="331" y="112" width="20" height="20"/><use href="#d15" x="354" y="112" width="20" height="20"/><use href="#d16" x="377" y="112" width="20" height="20"/><use href="#d17" x="400" y="112" width="20" height="20"/><use href="#d18" x="429" y="112" width="20" height="20"/><use href="#d19" x="452" y="112" width="20" height="20"/><use href="#d20" x="475" y="112" width="20" height="20"/>
<rect x="503" y="111" width="120" height="22" fill="#fff"/><text x="522" y="128" class="dd" textLength="34" lengthAdjust="spacingAndGlyphs">DIMN</text><path d="M607 120l4 4 4-4" fill="none" stroke="#666"/>
<use href="#d21" x="624" y="112" width="20" height="20"/>
<use href="#s1" x="658" y="112" width="20" height="20"/><use href="#s2" x="681" y="112" width="20" height="20"/><use href="#s3" x="704" y="112" width="20" height="20"/><use href="#s4" x="732" y="112" width="20" height="20"/><use href="#s5" x="755" y="112" width="20" height="20"/><use href="#s6" x="778" y="112" width="20" height="20"/><use href="#s7" x="801" y="112" width="20" height="20"/><use href="#s5" x="824" y="112" width="20" height="20"/><use href="#s7" x="848" y="112" width="20" height="20"/><use href="#s9" x="870" y="112" width="20" height="20"/><use href="#s10" x="893" y="112" width="20" height="20"/><use href="#s8" x="922" y="112" width="20" height="20"/><use href="#s9" x="945" y="112" width="20" height="20"/><use href="#s13" x="967" y="112" width="20" height="20"/><use href="#s10" x="991" y="112" width="20" height="20"/><use href="#s11" x="1020" y="112" width="20" height="20"/><use href="#s12" x="1043" y="112" width="20" height="20"/><use href="#s13" x="1066" y="112" width="20" height="20"/><use href="#s14" x="1089" y="112" width="20" height="20"/><use href="#s15" x="1112" y="112" width="20" height="20"/>
<use href="#brush" x="14" y="139" width="20" height="20"/><use href="#pr" x="37" y="139" width="20" height="20"/><use href="#lw" x="60" y="139" width="20" height="20"/>
</g>

<!-- left bar -->
<rect x="5" y="165" width="23" height="448" fill="#2e3642" stroke="#262c37"/>
<path d="M8 169.500h14" stroke="#bbb" stroke-dasharray="1 1" stroke-width="2"/>
<g>
<use href="#l1" x="6" y="175" width="20" height="20"/><use href="#l2" x="6" y="197" width="20" height="20"/><use href="#l3" x="6" y="219" width="20" height="20"/><use href="#l4" x="6" y="241" width="20" height="20"/><use href="#l5" x="6" y="263" width="20" height="20"/><use href="#l6" x="6" y="285" width="20" height="20"/><use href="#l7" x="6" y="307" width="20" height="20"/><use href="#l8" x="6" y="329" width="20" height="20"/><use href="#l9" x="6" y="351" width="20" height="20"/><use href="#l10" x="6" y="373" width="20" height="20"/><use href="#l11" x="6" y="394" width="20" height="20"/><use href="#l12" x="6" y="417" width="20" height="20"/><use href="#l13" x="6" y="440" width="20" height="20"/><use href="#l14" x="6" y="461" width="20" height="20"/><use href="#l15" x="6" y="483" width="20" height="20"/><use href="#l16" x="6" y="505" width="20" height="20"/><use href="#l17" x="6" y="527" width="20" height="20"/><use href="#l18" x="6" y="549" width="20" height="20"/><use href="#l19" x="6" y="572" width="20" height="20"/><use href="#l20" x="6" y="593" width="20" height="20"/>
</g>
<!-- right bar -->
<rect x="1676" y="165" width="23" height="405" fill="#2e3642" stroke="#262c37"/>
<path d="M1679 169.500h14" stroke="#bbb" stroke-dasharray="1 1" stroke-width="2"/>
<g>
<use href="#r1" x="1677" y="175" width="20" height="20"/><use href="#r2" x="1677" y="197" width="20" height="20"/><use href="#r3" x="1677" y="219" width="20" height="20"/><use href="#r4" x="1677" y="241" width="20" height="20"/><use href="#r5" x="1677" y="263" width="20" height="20"/><use href="#r6" x="1677" y="284" width="20" height="20"/><use href="#r7" x="1677" y="307" width="20" height="20"/><use href="#r8" x="1677" y="328" width="20" height="20"/><use href="#r9" x="1677" y="351" width="20" height="20"/><use href="#r10" x="1677" y="373" width="20" height="20"/><use href="#r11" x="1677" y="395" width="20" height="20"/><use href="#r12" x="1677" y="417" width="20" height="20"/><use href="#r13" x="1677" y="439" width="20" height="20"/><use href="#r14" x="1677" y="462" width="20" height="20"/><use href="#r15" x="1677" y="483" width="20" height="20"/><use href="#r16" x="1677" y="505" width="20" height="20"/><use href="#r17" x="1677" y="527" width="20" height="20"/><use href="#r18" x="1677" y="548" width="20" height="20"/>
</g>

<!-- crosshair -->
<path d="M33 1289.500H1671" stroke="#fff"/>
<path d="M1637.500 165V1289" stroke="#fff"/>
<!-- frame -->
<rect x="87" y="170.500" width="1563" height="1118" fill="none" stroke="#0ff" stroke-width="4"/>
<path d="M1631.500 1290.500V1283.500H1643.500V1290.500" fill="none" stroke="#fff"/>

<!-- title + notes -->
<text x="365" y="265" font-size="44" fill="#d8d8d8" textLength="123" lengthAdjust="spacingAndGlyphs" style="font-family:'Noto Sans CJK SC',sans-serif;font-weight:300">桩基说明</text>
<rect x="358" y="272" width="137" height="3" fill="#ff0"/><rect x="358" y="275" width="137" height="2" fill="#8c8c00"/>

<g transform="translate(0,-2)">
<text class="t" x="127" y="328" textLength="679" lengthAdjust="spacingAndGlyphs"><tspan class="n">1.</tspan> 图注尺寸除标高以米为单位外，其余尺寸均以毫米为单位。图注标高除注明者外均为相对标高，绝对标高为黄海高程系。</text>
<text class="t" x="127" y="355" textLength="240" lengthAdjust="spacingAndGlyphs"><tspan class="n">2.</tspan>本工程的<tspan class="n">±0.00</tspan> 按道路高程加<tspan class="n">0.5</tspan> 米。</text>
<text class="t" x="127" y="383" textLength="335" lengthAdjust="spacingAndGlyphs"><tspan class="n">3.</tspan>本工程基础根据华东地勘公司提供的地质报告  进行设计。</text>
<text class="t" x="116" y="411" textLength="489" lengthAdjust="spacingAndGlyphs"><tspan class="n">4.</tspan>本工程桩基采用钻孔灌注桩，桩下端进入<tspan class="n">5</tspan> 层圆砾层不小于<tspan class="n">2m</tspan>，桩长暂定为<tspan class="n">27m</tspan>，</text>
<text class="t" x="134" y="441" textLength="240" lengthAdjust="spacingAndGlyphs">桩端土承载力特征值取<tspan class="n">qpa=900Kpa</tspan> ,</text>
<text class="t" x="124" y="475" textLength="535" lengthAdjust="spacingAndGlyphs"><tspan class="n">5.</tspan>本工程采用的桩直径为<tspan class="n">800、900</tspan>，桩的竖向极限承载力值应根据静载试验结果最终确定。</text>
<text class="t" x="124" y="506" textLength="604" lengthAdjust="spacingAndGlyphs"><tspan class="n">6.</tspan> 本工程桩基应先施工试桩，待试桩混凝土达到设计强度后进行静载试验，静载试验完毕且试桩均满足设计</text>
<text class="t" x="143" y="533" textLength="594" lengthAdjust="spacingAndGlyphs">要求后，方可进行本工程工程桩施工，当试验结果不满足设计要求时请及时通知我院本设计需作必要的调整。</text>
<text class="t" x="124" y="560" textLength="623" lengthAdjust="spacingAndGlyphs"><tspan class="n">7.</tspan>材料<tspan class="n">(1)</tspan> 混凝土强度等级: 桩身采用 <tspan class="n">C35</tspan>；钢筋应有钢厂质保证明，混凝土应在专门试验室内做级配试验</text>
<text class="t" x="166" y="587" textLength="453" lengthAdjust="spacingAndGlyphs"><tspan class="n">(2)</tspan> 钢筋 图示符号 为    <tspan class="n">HPB235</tspan> 级钢筋，？为<tspan class="n">HRB335</tspan> 级钢筋。</text>
<text class="t" x="124" y="614" textLength="698" lengthAdjust="spacingAndGlyphs"><tspan class="n">8.</tspan>钢筋笼箍筋型式为螺旋箍，局部与桩纵筋点焊，防止变形，桩纵筋接头全部采用对焊，接头应一半错开，接头间距为<tspan class="n">35d</tspan>。</text>
<text class="t" x="124" y="641" textLength="505" lengthAdjust="spacingAndGlyphs"><tspan class="n">9.</tspan>桩端沉渣厚度应不大于<tspan class="n">2</tspan> 厘米。且在测量桩端沉渣厚度符和设计要求后立即浇灌混凝土。</text>
<text class="t" x="149" y="662" textLength="354" lengthAdjust="spacingAndGlyphs">沉桩时桩身垂直度偏差不超过<tspan class="n">1%</tspan>，平面水平偏差不超过<tspan class="n">100mm</tspan></text>
<text class="t" x="119" y="688" textLength="734" lengthAdjust="spacingAndGlyphs"><tspan class="n">10.</tspan>钢筋笼的混凝土保护层厚度为<tspan class="n">50mm</tspan>，采用水下混凝土灌注的施工工艺，同时整根桩的混凝土要求连续浇注完毕不得留施工缝。</text>
<text class="t" x="119" y="715" textLength="724" lengthAdjust="spacingAndGlyphs"><tspan class="n">11.</tspan>桩顶浮浆厚度本图仅为示意，施工单位可根据施工经验确定，且不小于<tspan class="n">1.5</tspan>米，保证设计标高以下的混凝土质量符合设计要求。</text>
<text class="t" x="119" y="743" textLength="587" lengthAdjust="spacingAndGlyphs"><tspan class="n">12.</tspan>试桩成孔完毕，要求测孔径及孔深，并作好记录认真如实填写成桩记录，如发现异常情况应及时处理。</text>
<text class="t" x="119" y="770" textLength="663" lengthAdjust="spacingAndGlyphs"><tspan class="n">13.</tspan>桩施工完毕，要对所有桩进行低应变检测，待桩检测完毕且均满足设计要求后，方可进行桩承台及其上部结构施工。</text>
<text class="t" x="119" y="797" textLength="455" lengthAdjust="spacingAndGlyphs"><tspan class="n">14.</tspan>桩基施工过程中，要采取措施，确保周围建筑物、构筑物及地下设施的安全。</text>
<text class="t" x="119" y="823" textLength="645" lengthAdjust="spacingAndGlyphs"><tspan class="n">15.</tspan>桩基施工时除按本说明外,还应严格遵守现行有关的施工及验收规范、规定、规程，以确保施工质量和人身安全。</text>
<text class="t" x="119" y="849" textLength="630" lengthAdjust="spacingAndGlyphs"><tspan class="n">16.</tspan>桩混凝土含砂率宜在<tspan class="n">40~45%</tspan>,水灰比宜在<tspan class="n">0.50~0.55</tspan>,塌落度<tspan class="n">180~220mm</tspan> 并有足够的和易性,</text>
<text class="t" x="145" y="877" textLength="287" lengthAdjust="spacingAndGlyphs"><tspan class="n">1</tspan> 小时内损失塌落度小于<tspan class="n">50mm</tspan>,不得使用早强剂。</text>
<text class="t" x="119" y="904" textLength="593" lengthAdjust="spacingAndGlyphs"><tspan class="n">17.</tspan>沉桩时为避免塌孔，孔内应保持压力在<tspan class="n">20kpa</tspan> 以上，泥浆比重应控制在<tspan class="n">1.2~1.3,PH</tspan>值为<tspan class="n">7~9</tspan></text>
<text class="t" x="145" y="933" textLength="362" lengthAdjust="spacingAndGlyphs">钢筋混凝土钻孔桩身应连续浇筑，桩身充盈系数应为<tspan class="n">1.1~1.25.</tspan></text>
<text class="t" x="119" y="960" textLength="591" lengthAdjust="spacingAndGlyphs"><tspan class="n">18.</tspan>桩身在续浇筑时钢筋笼下沉不得大于<tspan class="n">100mm</tspan>,上浮不得大于<tspan class="n">200mm</tspan>,钢筋笼顶应焊一直径较粗钢筋</text>
<text class="t" x="119" y="987" textLength="444" lengthAdjust="spacingAndGlyphs"><tspan class="n">19.</tspan>桩身浇筑超高部分施工承台时凿除，桩内主筋锚入承台内不小于<tspan class="n">600mm</tspan>。</text>
<text class="t" x="121" y="1030" textLength="639" lengthAdjust="spacingAndGlyphs"><tspan class="n">20</tspan>、凡本说明未尽之处请参照强制性行业标准《建筑桩基技术规范》<tspan class="n">JGJ94-94</tspan>及有关验收标准进行施工验收。</text>
</g>

<!-- pile detail -->
<rect x="1014" y="243" width="101" height="628" fill="none" stroke="#e6e600" stroke-width="1.300"/>
<path d="M1014 352h101" stroke="#a0a000" stroke-width="1.500"/>
<path d="M1018 297V865M1109 297V865" stroke="#fff" stroke-width="3"/>
<path d="M1044 297V865M1064 297V865M1084 297V865" stroke="#fff" stroke-width="2.500"/>
<path d="M1018 373H1109M1018 566H1109M1018 687H1109M1018 792H1109M1017 865H1110" stroke="#fff" stroke-width="3"/>
<path stroke="#8c8c00" stroke-width="2" fill="none" d="M1018 360L1109 370.300M1018 370.300L1109 380.500M1018 380.500L1109 390.800M1018 390.800L1109 401.100M1018 401.100L1109 411.300M1018 411.300L1109 421.600M1018 421.600L1109 431.900M1018 431.900L1109 442.100M1018 442.100L1109 452.400M1018 452.400L1109 462.700M1018 462.700L1109 472.900M1018 472.900L1109 483.200M1018 483.200L1109 493.500M1018 493.500L1109 503.700M1018 503.700L1109 514M1018 514L1109 534.700M1018 534.700L1109 555.300M1018 555.300L1109 576M1018 576L1109 596.700M1018 596.700L1109 617.300M1018 617.300L1109 638M1018 638L1109 658.700M1018 658.700L1109 679.300M1018 679.300L1109 700M1018 700L1109 720.700M1018 720.700L1109 741.300M1018 741.300L1109 762M1018 762L1109 782.700M1018 782.700L1109 803.300M1018 803.300L1109 824M1018 824L1109 844.700M1018 844.700L1109 865"/>
<path stroke="#f0f000" stroke-width="2" fill="none" d="M1018 360H1109M1018 370.300H1109M1018 380.500H1109M1018 390.800H1109M1018 401.100H1109M1018 411.300H1109M1018 421.600H1109M1018 431.900H1109M1018 442.100H1109M1018 452.400H1109M1018 462.700H1109M1018 472.900H1109M1018 483.200H1109M1018 493.500H1109M1018 503.700H1109M1018 514H1109M1018 534.700H1109M1018 555.300H1109M1018 576H1109M1018 596.700H1109M1018 617.300H1109M1018 638H1109M1018 658.700H1109M1018 679.300H1109M1018 700H1109M1018 720.700H1109M1018 741.300H1109M1018 762H1109M1018 782.700H1109M1018 803.300H1109M1018 824H1109M1018 844.700H1109"/>
<path d="M988 608.500H1133M988 611H1133" stroke="#e6e600"/>
<path d="M1058 603l3 12 3-12 2 12" fill="none" stroke="#e6e600" stroke-width="1.200"/>
<g stroke="#c8c8c8" fill="none" stroke-width="1.200">
<path d="M922 352V865M944 297V873M896 352H999M933 297H974M909 865H1009M957 360H987M970 352V362"/>
<path d="M855 344.500H912M897 344.500L904 352L912 344.500"/>
<path d="M916 242H1000L1022 287"/>
<path d="M1014 883V923M1115 883V923M1014 911H1115"/>
</g>
<path d="M939 514H980" stroke="#e6e600" stroke-width="1.200"/>
<path d="M920 350l4 4M942 350l4 4M942 295l4 4M942 512l4 4M920 863l4 4M942 863l4 4M968 350l4 4M968 358l4 4M1012 913l4-4M1113 913l4-4" stroke="#ff0" stroke-width="2.500"/>
<text class="s" x="928" y="240" textLength="57" lengthAdjust="spacingAndGlyphs">桩顶浮浆应凿除</text>
<text class="s" x="912" y="256" textLength="82" lengthAdjust="spacingAndGlyphs">浮浆厚度详见桩基说明</text>
<text x="857" y="340" font-size="13" fill="#e4e4e4" textLength="53" lengthAdjust="spacingAndGlyphs">工程桩桩顶</text>
<g font-size="13" fill="#d0d0d0">
<text transform="translate(939,329) rotate(-90)" font-size="19" textLength="24" lengthAdjust="spacingAndGlyphs">40d</text>
<text transform="translate(958,346) rotate(-90)" font-size="11" textLength="41" lengthAdjust="spacingAndGlyphs">d纵筋直径</text>
<text transform="translate(966,379) rotate(-90)" font-size="13" textLength="15" lengthAdjust="spacingAndGlyphs">100</text>
<text transform="translate(943,460) rotate(-90)" font-size="12" textLength="33" lengthAdjust="spacingAndGlyphs">4 倍桩径</text>
<text transform="translate(957,473) rotate(-90)" font-size="15" textLength="69" lengthAdjust="spacingAndGlyphs">?8@150 螺旋箍</text>
<text transform="translate(957,690) rotate(-90)" font-size="15" textLength="70" lengthAdjust="spacingAndGlyphs">?8@200 螺旋箍</text>
<text transform="translate(919,612) rotate(-90)" font-size="17" textLength="37" lengthAdjust="spacingAndGlyphs">27000</text>
<text transform="translate(935,637) rotate(-90)" font-size="15" textLength="109" lengthAdjust="spacingAndGlyphs">?14@2000 焊接箍加劲箍</text>
</g>
<g font-size="24" fill="#e0e0e0">
<text x="983" y="466" textLength="18" lengthAdjust="spacingAndGlyphs">1c</text><text x="1140" y="466" textLength="18" lengthAdjust="spacingAndGlyphs">1c</text>
<text x="982" y="746" textLength="19" lengthAdjust="spacingAndGlyphs">2c</text><text x="1139" y="746" textLength="19" lengthAdjust="spacingAndGlyphs">2c</text>
</g>
<path d="M975 473H1005M1126 473H1156M976 752H1005M1126 752H1156" stroke="#ff0" stroke-width="3"/>
<text x="1058" y="907" font-size="12" fill="#ccc">D</text>
<text x="1026" y="951" font-size="20" fill="#e8e800" textLength="74" lengthAdjust="spacingAndGlyphs" style="font-family:'Noto Sans CJK SC',sans-serif">工程桩大样</text>
<rect x="1014" y="957" width="105" height="3" fill="#ff0"/><rect x="1014" y="960" width="105" height="2" fill="#8c8c00"/>

<!-- cap detail -->
<path d="M1343 360H1322V250H1475V360H1454" fill="none" stroke="#b0b0b0" stroke-width="1.500"/>
<rect x="1326" y="253.500" width="145" height="99" fill="none" stroke="#f00" stroke-width="3"/>
<path d="M1326 341H1471" stroke="#f00" stroke-width="2.500"/>
<path d="M1459 262l9-9M1464 266l7-8" stroke="#f00" stroke-width="2"/>
<path d="M1329 253v5M1343 253v5M1357 253v5M1371 253v5M1385 253v5M1399 253v5M1412 253v5M1426 253v5M1440 253v5M1454 253v5M1329 338v3M1343 338v3M1357 338v3M1371 338v3M1385 338v3M1399 338v3M1412 338v3M1426 338v3M1440 338v3M1454 338v3M1327 283h4M1327 297h4M1327 311h4M1327 325h4M1466 283h4M1466 297h4M1466 311h4M1466 325h4" stroke="#f00" stroke-width="2"/>
<rect x="1345" y="343" width="108" height="9" fill="#000" opacity=".3"/>
<path d="M1343 430V360C1340 355 1345 352 1345 345L1358 343 1375 345 1390 342 1410 344 1422 344 1421 349 1428 343 1445 344 1455 348 1454 358V430C1430 415 1400 405 1370 414 1355 418 1350 425 1343 430C1355 440 1380 450 1410 438 1422 432 1432 425 1435 418" fill="none" stroke="#d0d0d0" stroke-width="1.300"/>
<g stroke="#d0d0d0" fill="none" stroke-width="1.100">
<path d="M1371 254V240H1433M1391 240V254M1412 240V254"/>
<path d="M1371 345V320H1433M1391 320V345M1412 320V345"/>
<path d="M1329 312H1308V284M1308 312V327H1329"/>
<path d="M1470 311H1449V283M1449 311V326H1470"/>
</g>
<g fill="#e4e4e4" font-size="12">
<text x="1382" y="237" textLength="24" lengthAdjust="spacingAndGlyphs">?2@150</text>
<text x="1382" y="318" textLength="24" lengthAdjust="spacingAndGlyphs">?2@150</text>
<text transform="translate(1307,316) rotate(-90)" textLength="28" lengthAdjust="spacingAndGlyphs">?12@150</text>
<text transform="translate(1446,315) rotate(-90)" textLength="28" lengthAdjust="spacingAndGlyphs">?12@150</text>
</g>
<g stroke="#00a000" fill="none" stroke-width="1.300">
<path d="M1517 250V360M1497 250H1520M1498 339H1522M1497 360H1522"/>
<path d="M1322 447V473M1344 447V473M1454 447V473M1475 447V473M1322 467H1475"/>
</g>
<path d="M1515 248l4 4M1515 337l4 4M1515 358l4 4M1320 470l4-5M1342 470l4-5M1452 470l4-5M1473 470l4-5" stroke="#f0f" stroke-width="2"/>
<g fill="#00e000" font-size="13">
<text transform="translate(1514,309) rotate(-90)" textLength="18" lengthAdjust="spacingAndGlyphs">900</text>
<text transform="translate(1514,360) rotate(-90)" textLength="17" lengthAdjust="spacingAndGlyphs">100</text>
<text x="1324" y="464" textLength="18" lengthAdjust="spacingAndGlyphs">200</text>
<text x="1379" y="464" font-size="12" textLength="41" lengthAdjust="spacingAndGlyphs">D(桩心直径)</text>
<text x="1454" y="464" textLength="18" lengthAdjust="spacingAndGlyphs">200</text>
</g>
<g font-size="19" fill="#e8e8e8" style="font-weight:700">
<text x="1347" y="498">承</text><text x="1387" y="498">台</text><text x="1425" y="498">大</text><text x="1465" y="498">样</text>
</g>
<path d="M1339 509.500H1472" stroke="#00c000" stroke-width="3"/>

<!-- viewcube -->
<circle cx="1588" cy="247" r="53.500" fill="none" stroke="#2b2b2b" stroke-width="13"/>
<g font-size="20" fill="#8e8e8e" text-anchor="middle">
<text x="1588" y="200">北</text><text x="1531" y="256">西</text><text x="1644" y="256">东</text><text x="1588" y="313">南</text>
</g>
<rect x="1562" y="221" width="52" height="52" fill="#9e9e9e" stroke="#777"/>
<rect x="1572" y="231" width="32" height="32" fill="#8b8b8b"/>
<text x="1588" y="256" font-size="22" fill="#555" text-anchor="middle">上</text>
<rect x="1559" y="335" width="58" height="17" rx="4" fill="#78787e"/>
<text x="1564" y="348" font-size="11.500" fill="#9a9a9a" textLength="33" lengthAdjust="spacingAndGlyphs">未命名</text>
<path d="M1603 341h9l-4.500 5z" fill="none" stroke="#999"/>

<!-- section circle -->
<circle cx="1389" cy="675" r="53" fill="none" stroke="#d0d000" stroke-width="1.300"/>
<path d="M1389 627L1421 641 1437 675 1422 711 1389 724 1356 708 1341 675 1355 642z" fill="none" stroke="#fff" stroke-width="3"/>
<path d="M1389 617V733M1323 675H1468M1468 622V727M1416 622H1476M1416 727H1476" stroke="#c8c8c8" stroke-width="1.100" fill="none"/>
<path d="M1466 620l4 4M1466 673l4 4M1466 725l4 4" stroke="#ff0" stroke-width="2.500"/>
<path d="M1388 628h3v3h-3zM1420 641h4v4h-4zM1433 674h4v4h-4zM1420 705h4v4h-4zM1388 719h3v3h-3zM1355 705h4v3h-4zM1342 673h4v4h-4zM1355 641h4v4h-4z" fill="#f00"/>
<g fill="#d8d8d8">
<text transform="translate(1466,661) rotate(-90)" font-size="14" textLength="20" lengthAdjust="spacingAndGlyphs">450</text>
<text transform="translate(1466,714) rotate(-90)" font-size="14" textLength="20" lengthAdjust="spacingAndGlyphs">450</text>
<text transform="translate(1481,665) rotate(-90)" font-size="12" textLength="27" lengthAdjust="spacingAndGlyphs">(400)</text>
<text transform="translate(1481,718) rotate(-90)" font-size="12" textLength="27" lengthAdjust="spacingAndGlyphs">(400)</text>
<text x="1306" y="729" font-size="15" textLength="33" lengthAdjust="spacingAndGlyphs">16?18</text>
<text x="1302" y="743" font-size="14" textLength="46" lengthAdjust="spacingAndGlyphs">(12?18)</text>
<text x="1419" y="752" font-size="15" textLength="98" lengthAdjust="spacingAndGlyphs">?8@150/?8@200</text>
<text x="1350" y="784" font-size="25" textLength="123" lengthAdjust="spacingAndGlyphs">1c-1c/2c-2c</text>
</g>
<path d="M1302 730.500H1348L1356 710" fill="none" stroke="#b0b0b0"/>
<path d="M1409 718L1416 754H1504" fill="none" stroke="#c0c000" stroke-width="1.300"/>
<rect x="1336" y="790" width="136" height="3" fill="#ff0"/><rect x="1336" y="794" width="136" height="1" fill="#e0e000"/>

<!-- title block -->
<g stroke="#9c9c9c" stroke-width="1.200" fill="none">
<rect x="1147" y="1188" width="502" height="100" stroke-width="1.800"/>
<path d="M1314 1188V1288M1509.500 1188V1288M1552 1188V1288M1509 1205H1649M1509 1222H1649M1509 1239H1649M1509 1256H1649M1147 1272H1649M1314 1205H1509M1147 1256H1314M1175 1256V1288M1230 1256V1288M1258 1256V1288M1342 1272V1288M1398 1272V1288M1454 1272V1288M1580 1272V1288M1608 1272V1288"/>
</g>
<text class="y" x="1531" y="1201">项目号</text><text class="y" x="1531" y="1218">设计项目</text><text class="y" x="1531" y="1235">设计阶段</text><text class="y" x="1531" y="1252">图 号</text><text class="y" x="1531" y="1269">日 期</text><text class="y" x="1531" y="1285">比 例</text>
<text class="y" x="1161" y="1269">设计</text><text class="y" x="1245" y="1269">审核</text><text class="y" x="1161" y="1285">制图</text><text class="y" x="1245" y="1285">校对</text><text class="y" x="1329" y="1285">审定</text><text class="y" x="1427" y="1285">项目负责人</text><text class="y" x="1595" y="1285">张号</text><text class="y" x="1584" y="1235">施工图</text>
<text class="w" x="1391" y="1235" style="font-size:12.500px">桩身大样</text><text class="w" x="1383" y="1252" style="font-size:12.500px">施工说明</text>
<text class="w" x="1587" y="1252" textLength="40" lengthAdjust="spacingAndGlyphs">结施 -03</text>
<text x="1587" y="1269" font-size="14" fill="#e0e0e0" text-anchor="middle" textLength="44" lengthAdjust="spacingAndGlyphs">2008-2</text>
<text x="1562" y="1285" font-size="12" fill="#e0e0e0" text-anchor="middle" textLength="17" lengthAdjust="spacingAndGlyphs">1:100</text>
<text x="1630" y="1285" font-size="13" fill="#e0e0e0" text-anchor="middle">3/8</text>

<!-- UCS -->
<path d="M59.500 1214V1259M65 1264.500H110" stroke="#ddd" fill="none"/>
<rect x="56" y="1259.500" width="8.500" height="9" fill="none" stroke="#ddd"/>
<text x="60" y="1209" font-size="20" fill="#ddd">Y</text>
<text x="113" y="1263" font-size="20" fill="#ddd">X</text>

<!-- command history -->
<rect x="692" y="1206" width="107" height="15" fill="#4a4a4a" rx="2"/><text x="694" y="1218" class="h" textLength="103" lengthAdjust="spacingAndGlyphs">命令: _textedit</text>
<rect x="692" y="1226" width="199" height="15" fill="#4a4a4a" rx="2"/><text x="694" y="1238" class="h" textLength="195" lengthAdjust="spacingAndGlyphs">当前设置: 编辑模式 = Multiple</text>
<rect x="692" y="1246" width="271" height="15" fill="#4a4a4a" rx="2"/><text x="694" y="1258" class="h" style="fill:#d8d8d8" textLength="267" lengthAdjust="spacingAndGlyphs">选择注释对象或 [放弃(U)/模式(M)]: *取消*</text>
<rect x="628" y="1264" width="58" height="26" fill="#2f3744"/>
<rect x="686" y="1264" width="389" height="23" fill="#aeaeae"/>
<path d="M1075 1287.500H686" stroke="#fff"/>
<path d="M632 1268v16M635 1268v16" stroke="#999" stroke-dasharray="1.500 1" stroke-width="1.500"/>
<path d="M645 1273l7 7M652 1273l-7 7" stroke="#bbb" stroke-width="1.600"/>
<path d="M666 1284l7-9 0-3 3-1-1 4 2-1-2 3-5 8z" fill="#bbb"/>
<rect x="690" y="1272" width="14" height="13" fill="#666" stroke="#333"/><path d="M692 1278l3 2-3 2" fill="none" stroke="#ddd"/>
<path d="M708 1276h7l-3.500 5z" fill="#333"/>
<text x="724" y="1282" font-size="13" font-style="italic" fill="#727272">键入命令</text>
<path d="M1064 1279h8l-4-6z" fill="#555"/>

<!-- bottom tabs -->
<path d="M19 1300h18M19 1307h18M19 1314h18" stroke="#ddd" stroke-width="2"/>
<path d="M45 1319l7-24h51l-7 24z" fill="#3b4453"/>
<text x="62" y="1311" class="m" style="fill:#fff">模型</text>
<text x="110" y="1311" class="m" textLength="30" lengthAdjust="spacingAndGlyphs">布局1</text>
<path d="M150 1317l5-16" stroke="#55606e"/>
<path d="M173 1301v15M166 1308.500h15" stroke="#ddd" stroke-width="1.800"/>
<path d="M192 1317l5-16" stroke="#55606e"/>

<!-- status bar -->
<g fill="#3b4453">
<rect x="6" y="1325" width="483" height="24"/><rect x="493" y="1325" width="140" height="24"/><rect x="636" y="1325" width="30" height="24"/><rect x="669" y="1325" width="64" height="24"/><rect x="736" y="1325" width="154" height="24"/><rect x="893" y="1325" width="61" height="24"/><rect x="956" y="1325" width="114" height="24"/><rect x="1072" y="1325" width="106" height="24"/><rect x="1180" y="1325" width="147" height="24"/><rect x="1330" y="1325" width="38" height="24"/><rect x="1371" y="1325" width="24" height="24"/><rect x="1398" y="1325" width="96" height="24"/><rect x="1496" y="1325" width="23" height="24"/><rect x="1522" y="1325" width="42" height="24"/><rect x="1567" y="1325" width="22" height="24"/><rect x="1592" y="1325" width="23" height="24"/><rect x="1618" y="1325" width="30" height="24"/><rect x="1651" y="1325" width="24" height="24"/><rect x="1677" y="1325" width="25" height="24"/>
</g>
<g fill="#5b8ac4">
<rect x="761" y="1325" width="23" height="24"/><rect x="916" y="1325" width="22" height="24"/><rect x="982" y="1325" width="22" height="24"/><rect x="1075" y="1325" width="22" height="24"/><rect x="1138" y="1325" width="23" height="24"/><rect x="1181" y="1325" width="23" height="24"/><rect x="1592" y="1325" width="23" height="24"/>
</g>
<text x="521" y="1341" font-size="13" fill="#ddd" textLength="107" lengthAdjust="spacingAndGlyphs">290574, -268394, 0</text>
<text x="638" y="1341" font-size="12.500" fill="#ddd">模型</text>
<g stroke="#ddd" fill="none" stroke-width="1.200">
<path d="M674 1330h14M674 1335h14M674 1340h14M674 1345h14M677 1328v19M681 1328v19M685 1328v19"/>
<path d="M700 1331h12M700 1337h12M700 1343h12" stroke-dasharray="2 3" stroke-width="2"/>
<path d="M754 1331h-5v9h-9v7h7v-7"/>
<path d="M791 1331v15h16M816 1345a7 7 0 1 1 6-1M815 1340l8-9"/>
<path d="M764 1335h8M768 1331v8" stroke-width="1.400"/>
<path d="M895 1346l12-11M895 1346h15"/>
</g>
<path d="M771 1342h13v5h-13z" fill="#fff"/>
<path d="M723 1336h8l-4 5zM835 1336h8l-4 5zM878 1336h8l-4 5zM945 1336h8l-4 5zM1058 1336h8l-4 5zM1124 1336h8l-4 5zM1165 1336h8l-4 5zM1357 1336h8l-4 5zM1482 1336h8l-4 5zM1551 1336h8l-4 5z" fill="#ccc"/>
<path d="M858 1328l13 18" stroke="#b86060"/>
<path d="M921 1331h16v15h-16z" fill="none" stroke="#ddd" stroke-width="1.300"/><path d="M919 1329h5v5h-5z" fill="#fff"/>
<use href="#st" x="960" y="1327" width="20" height="20"/>
<rect x="984" y="1327" width="18" height="20" fill="#ddd"/><path d="M986 1329h4v4h-4zM994 1329h4v4h-4zM990 1333h4v4h-4zM998 1333h3v4h-3zM986 1337h4v4h-4zM994 1337h4v4h-4zM990 1341h4v4h-4z" fill="#555"/>
<path d="M1012 1333h9M1016 1329v8" stroke="#ddd"/><path d="M1018 1335h12v12h-12z" fill="#74c898"/>
<path d="M1036 1338l9-7h8v9l-7 6h-10z" fill="none" stroke="#ddd"/><path d="M1036 1341h6v6h-6z" fill="none" stroke="#ee9040"/>
<path d="M1080 1330v15h15M1080 1330l3 3M1080 1330l-3 3M1087 1333l5 4-3 5" stroke="#fff" fill="none" stroke-width="1.400"/>
<rect x="1103" y="1331" width="18" height="14" fill="none" stroke="#6cb4ee" stroke-width="1.300" stroke-dasharray="3 2"/>
<path d="M1150 1329l7 11h-14z M1150 1329v-1" fill="none" stroke="#fff" stroke-width="1.300"/><circle cx="1150" cy="1340" r="3" fill="none" stroke="#fff"/>
<path d="M1192 1329l-6 17h4l3-6 3 6h4l-6-17z" fill="#fff"/>
<path d="M1217 1329l-6 17h4l3-6 3 6h4l-6-17z" fill="#ccc"/>
<path d="M1240 1329l-6 17h4l3-6 3 6h4l-6-17z" fill="#aaa"/>
<text x="1257" y="1341" font-size="13" fill="#ddd" textLength="63" lengthAdjust="spacingAndGlyphs">1:1 / 100%</text>
<circle cx="1341" cy="1337" r="6" fill="none" stroke="#ddd" stroke-width="3" stroke-dasharray="3 1"/>
<path d="M1383 1330v15M1376 1337.500h15" stroke="#ddd" stroke-width="1.600"/>
<path d="M1405 1328h7v20h-7z" fill="#ddd"/>
<text x="1427" y="1341" font-size="13" fill="#ddd">小数</text>
<rect x="1502" y="1329" width="12" height="16" fill="none" stroke="#ddd"/><path d="M1504 1333h8M1504 1337h8M1504 1341h8" stroke="#ddd"/>
<rect x="1528" y="1329" width="14" height="15" fill="none" stroke="#ddd"/><rect x="1536" y="1339" width="6" height="6" fill="#ddd"/>
<path d="M1572 1330h5v5h-5zM1574 1346l3-6 3 6z" fill="none" stroke="#ccc"/><circle cx="1584" cy="1332" r="3" fill="none" stroke="#ccc"/>
<circle cx="1603.500" cy="1337" r="8" fill="none" stroke="#fff" stroke-width="1.400"/><path d="M1599 1342l9-10" stroke="#fff" stroke-width="1.400"/>
<path d="M1625 1329h10v9h-10z" fill="#6cb4ee"/><path d="M1625 1338h8v9h-8z" fill="#e9a830"/><path d="M1635 1343l3 3 4-6" fill="none" stroke="#4ec06a" stroke-width="2"/>
<rect x="1656" y="1330" width="14" height="14" fill="none" stroke="#ddd"/><path d="M1659 1341l8-8M1663 1333h4v4M1659 1337v4h4" fill="none" stroke="#ddd"/>
<path d="M1681 1331h16M1681 1337h16M1681 1343h16" stroke="#ddd" stroke-width="2"/>
</svg>
</body></html>
